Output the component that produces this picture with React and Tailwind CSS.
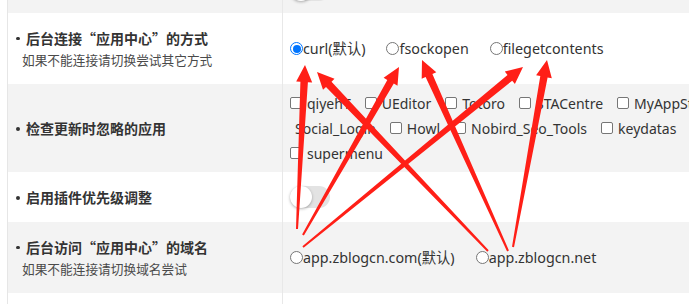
import React from "react";

const arrows = [
  [297, 229, 305, 65],
  [303, 235, 399, 67],
  [303, 247, 523, 67],
  [488, 251, 317, 72],
  [508, 251, 422, 60],
  [513, 247, 547, 60],
];

function arrowPoints([x1, y1, x2, y2]) {
  const dx = x2 - x1, dy = y2 - y1;
  const len = Math.hypot(dx, dy);
  const ux = dx / len, uy = dy / len;
  const nx = -uy, ny = ux;
  const headLen = 17, headW = 16, tailW = 2, neckW = 7.5;
  const bx = x2 - ux * headLen, by = y2 - uy * headLen;
  const p = [
    [x1 + (nx * tailW) / 2, y1 + (ny * tailW) / 2],
    [bx + (nx * neckW) / 2, by + (ny * neckW) / 2],
    [bx + (nx * headW) / 2, by + (ny * headW) / 2],
    [x2, y2],
    [bx - (nx * headW) / 2, by - (ny * headW) / 2],
    [bx - (nx * neckW) / 2, by - (ny * neckW) / 2],
    [x1 - (nx * tailW) / 2, y1 - (ny * tailW) / 2],
  ];
  return p.map((q) => q[0].toFixed(1) + "," + q[1].toFixed(1)).join(" ");
}

function Radio({ checked }) {
  return checked ? (
    <span className="inline-flex w-[13px] h-[13px] rounded-full border border-[#0075ff] bg-white items-center justify-center shrink-0">
      <span className="w-[8px] h-[8px] rounded-full bg-[#0075ff]" />
    </span>
  ) : (
    <span className="inline-block w-[13px] h-[13px] rounded-full border border-[#767676] bg-white shrink-0" />
  );
}

function RadioItem({ checked, children, last }) {
  return (
    <span className={"inline-flex items-center " + (last ? "" : "mr-[21px]")}>
      <Radio checked={checked} />
      <span>{children}</span>
    </span>
  );
}

function Check({ children }) {
  return (
    <span className="inline-flex items-center mr-[14px] whitespace-nowrap">
      <span className="inline-block w-[12px] h-[12px] rounded-[2px] border border-[#767676] bg-white mr-[5px] shrink-0" />
      <span>{children}</span>
    </span>
  );
}

function Toggle() {
  return (
    <span className="relative inline-block w-[40px] h-[22px] rounded-full bg-[#e3e3e3]">
      <span className="absolute left-0 top-0 w-[22px] h-[22px] rounded-full bg-white shadow-[0_1px_3px_rgba(0,0,0,0.3)]" />
    </span>
  );
}

function Label({ title, sub }) {
  return (
    <div className="w-[275px] shrink-0 border-r border-[#e8e8e8] flex flex-col justify-center pl-[14px]">
      <div className="flex items-center leading-[22px] text-[14px] font-bold text-[#333]">
        <span className="inline-block w-[3.5px] h-[3.5px] rounded-full bg-[#333] ml-[-6px] mr-[6.5px] mt-[2px]" />
        <span>{title}</span>
      </div>
      {sub && <div className="leading-[22px] text-[12.7px] text-[#4a4a4a]">{sub}</div>}
    </div>
  );
}

const latin = { fontFamily: '"Noto Sans", "Noto Sans CJK SC", sans-serif' };

export default function App() {
  return (
    <div
      className="relative w-[689px] h-[304px] overflow-hidden bg-white text-[#333]"
      style={latin}
    >
      <div
        className="ml-[7px] border-l border-[#e6e6e6] flex flex-col"
        style={{ fontFamily: '"Noto Sans CJK SC", "Noto Sans", sans-serif' }}
      >
        {/* row 0 */}
        <div className="flex h-[13px] bg-[#f3f3f3] overflow-hidden">
          <div className="w-[275px] shrink-0 border-r border-[#e8e8e8]" />
          <div className="pl-[7px] mt-[-21px]">
            <Toggle />
          </div>
        </div>
        {/* row 1 */}
        <div className="flex h-[71px] bg-white">
          <Label title="后台连接“应用中心”的方式" sub="如果不能连接请切换尝试其它方式" />
          <div className="flex items-center pl-[7px] text-[14.3px] text-[#333]" style={latin}>
            <RadioItem checked>curl(默认)</RadioItem>
            <RadioItem>fsockopen</RadioItem>
            <RadioItem last>filegetcontents</RadioItem>
          </div>
        </div>
        {/* row 2 */}
        <div className="flex h-[88px] bg-[#f3f3f3]">
          <Label title="检查更新时忽略的应用" />
          <div className="flex flex-col justify-center pl-[7px] text-[14px] leading-[25px] text-[#333] whitespace-nowrap" style={latin}>
            <div className="flex items-center">
              <Check>qiyehT</Check>
              <Check>UEditor</Check>
              <Check>Totoro</Check>
              <Check>STACentre</Check>
              <Check>MyAppStore</Check>
            </div>
            <div className="flex items-center">
              <span className="ml-[5px] mr-[14px]">Social_Login</span>
              <Check>Howl</Check>
              <Check>Nobird_Seo_Tools</Check>
              <Check>keydatas</Check>
            </div>
            <div className="flex items-center">
              <Check>supermenu</Check>
            </div>
          </div>
        </div>
        {/* row 3 */}
        <div className="flex h-[50px] bg-white">
          <Label title="启用插件优先级调整" />
          <div className="flex items-center pl-[7px]">
            <Toggle />
          </div>
        </div>
        {/* row 4 */}
        <div className="flex h-[71px] bg-[#f3f3f3]">
          <Label title="后台访问“应用中心”的域名" sub="如果不能连接请切换域名尝试" />
          <div className="flex items-center pl-[7px] text-[14.3px] text-[#333]" style={latin}>
            <RadioItem>app.zblogcn.com(默认)</RadioItem>
            <RadioItem last>app.zblogcn.net</RadioItem>
          </div>
        </div>
        {/* row 5 */}
        <div className="flex h-[20px] bg-white">
          <div className="w-[275px] shrink-0 border-r border-[#e8e8e8]" />
        </div>
      </div>
      <svg className="absolute left-0 top-0 pointer-events-none" width="689" height="304" viewBox="0 0 689 304">
        {arrows.map((a, i) => (
          <polygon key={i} points={arrowPoints(a)} fill="#ff1f17" />
        ))}
      </svg>
    </div>
  );
}
